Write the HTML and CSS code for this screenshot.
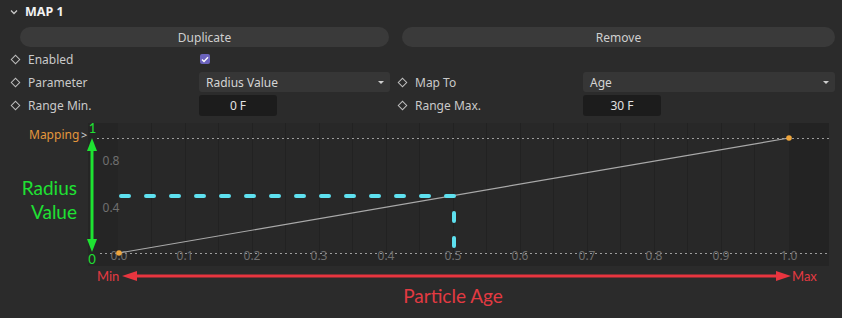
FILE: index.html
```html
<!DOCTYPE html>
<html lang="en">
<head>
    <meta charset="UTF-8">
    <title>Map 1</title>
    <link rel="stylesheet" href="styles.css">
</head>
<body>

<div class="group-header">
    <svg class="chevron" width="8" height="6" viewBox="0 0 8 6"><path d="M1 1.5 L4 4.5 L7 1.5" fill="none" stroke="#c8c8c8" stroke-width="1.3"/></svg>
    <span class="group-title">MAP 1</span>
</div>

<div class="button-row">
    <button>Duplicate</button>
    <button>Remove</button>
</div>

<div class="param-grid">
    <div class="label"><span class="keyframe"></span>Enabled</div>
    <div class="cell"><span class="checkbox"><svg width="8" height="7" viewBox="0 0 8 7"><path d="M1 3.6 L3 5.5 L7 1.3" fill="none" stroke="#fff" stroke-width="1.4"/></svg></span></div>
    <div></div>
    <div></div>

    <div class="label"><span class="keyframe"></span>Parameter</div>
    <div class="cell"><div class="dropdown">Radius Value<span class="caret"></span></div></div>
    <div class="label second"><span class="keyframe"></span>Map To</div>
    <div class="cell"><div class="dropdown">Age<span class="caret"></span></div></div>

    <div class="label"><span class="keyframe"></span>Range Min.</div>
    <div class="cell"><div class="number-field">0 F</div></div>
    <div class="label second"><span class="keyframe"></span>Range Max.</div>
    <div class="cell"><div class="number-field">30 F</div></div>
</div>

<div class="graph">
    <svg width="842" height="198" viewBox="0 0 842 198">
        <!-- panel -->
        <rect x="88" y="2" width="741" height="143" fill="#252525"/>
        <rect x="118" y="2" width="671" height="130" fill="#282828"/>
        <rect x="789" y="2" width="40" height="130" fill="#232323"/>
        <g stroke="#222" stroke-width="1">
            <line x1="151.5" y1="2" x2="151.5" y2="132"/>
            <line x1="185.5" y1="2" x2="185.5" y2="132"/>
            <line x1="218.5" y1="2" x2="218.5" y2="132"/>
            <line x1="252.5" y1="2" x2="252.5" y2="132"/>
            <line x1="285.5" y1="2" x2="285.5" y2="132"/>
            <line x1="319.5" y1="2" x2="319.5" y2="132"/>
            <line x1="352.5" y1="2" x2="352.5" y2="132"/>
            <line x1="386.5" y1="2" x2="386.5" y2="132"/>
            <line x1="419.5" y1="2" x2="419.5" y2="132"/>
            <line x1="453.5" y1="2" x2="453.5" y2="132"/>
            <line x1="486.5" y1="2" x2="486.5" y2="132"/>
            <line x1="520.5" y1="2" x2="520.5" y2="132"/>
            <line x1="553.5" y1="2" x2="553.5" y2="132"/>
            <line x1="587.5" y1="2" x2="587.5" y2="132"/>
            <line x1="620.5" y1="2" x2="620.5" y2="132"/>
            <line x1="654.5" y1="2" x2="654.5" y2="132"/>
            <line x1="687.5" y1="2" x2="687.5" y2="132"/>
            <line x1="721.5" y1="2" x2="721.5" y2="132"/>
            <line x1="754.5" y1="2" x2="754.5" y2="132"/>
        </g>

        <!-- limits -->
        <g stroke="#9c9c9c" stroke-width="1" stroke-dasharray="2 3">
            <line x1="97" y1="17.5" x2="829" y2="17.5"/>
            <line x1="100" y1="132.5" x2="829" y2="132.5"/>
        </g>

        <g class="axis-label" text-anchor="middle">
            <text x="111" y="44">0.8</text>
            <text x="111" y="91">0.4</text>
            <text x="119" y="139">0.0</text>
            <text x="185" y="139">0.1</text>
            <text x="252" y="139">0.2</text>
            <text x="319" y="139">0.3</text>
            <text x="386" y="139">0.4</text>
            <text x="453" y="139">0.5</text>
            <text x="520" y="139">0.6</text>
            <text x="587" y="139">0.7</text>
            <text x="654" y="139">0.8</text>
            <text x="721" y="139">0.9</text>
            <text x="789" y="139">1.0</text>
        </g>

        <text class="mapping" x="29" y="18">Mapping</text>
        <text class="mapping-arrow" x="81" y="18">&gt;</text>

        <!-- curve -->
        <line x1="119" y1="132" x2="789" y2="17" stroke="#a9a9a9" stroke-width="1.2"/>
        <circle cx="119" cy="132" r="2.8" fill="#eea53c"/>
        <circle cx="789" cy="17" r="2.8" fill="#eea53c"/>

        <!-- sample -->
        <path d="M121 75 H454 V132" fill="none" stroke="#5ee0ef" stroke-width="4" stroke-linecap="round" stroke-linejoin="round" stroke-dasharray="8 17"/>

        <!-- output annotation -->
        <text class="note green" x="92.5" y="12" text-anchor="middle">1</text>
        <text class="note green" x="92" y="143" text-anchor="middle">0</text>
        <line x1="92" y1="28" x2="92" y2="120" stroke="#1ee332" stroke-width="3"/>
        <path d="M92 17 L87 30 L97 30 Z" fill="#1ee332"/>
        <path d="M92 131 L87 118 L97 118 Z" fill="#1ee332"/>
        <text class="note big green" x="77" y="74" text-anchor="end">Radius</text>
        <text class="note big green" x="77" y="98" text-anchor="end">Value</text>

        <!-- input annotation -->
        <line x1="134" y1="155" x2="778" y2="155" stroke="#e8353f" stroke-width="3"/>
        <path d="M122 155 L137 150 L137 160 Z" fill="#e8353f"/>
        <path d="M791 155 L776 150 L776 160 Z" fill="#e8353f"/>
        <text class="note red" x="97" y="160">Min</text>
        <text class="note red" x="792" y="160">Max</text>
        <text class="note big red" x="453" y="182" text-anchor="middle">Particle Age</text>
    </svg>
</div>

</body>
</html>
```

FILE: styles.css
```css
body {
    margin: 0;
    background: #2b2b2b;
    color: #c9c9c9;
    font-family: "Noto Sans", "Open Sans", sans-serif;
    font-size: 12px;
    width: 842px;
    height: 318px;
    overflow: hidden;
}

.group-header {
    height: 23px;
    display: flex;
    align-items: center;
    padding-left: 10px;
    gap: 7px;
}

.chevron {
    margin-top: 1px;
}

.group-title {
    color: #f2f2f2;
    font-weight: bold;
    font-size: 12.5px;
}

.button-row {
    display: grid;
    grid-template-columns: 369px 433px;
    gap: 13px;
    padding: 4px 0 1px 20px;
}

button {
    height: 20px;
    border: none;
    border-radius: 10px;
    background: #3a3a3a;
    color: #cfcfcf;
    font-family: inherit;
    font-size: 12px;
    padding: 0;
}

.param-grid {
    display: grid;
    grid-template-columns: 190px 191px 193px 252px;
    grid-auto-rows: 22px;
    row-gap: 1px;
    padding-left: 9px;
}

.label {
    display: flex;
    align-items: center;
    gap: 9px;
    padding-left: 3px;
}

.label.second {
    padding-left: 9px;
}

.keyframe {
    width: 5px;
    height: 5px;
    border: 1.3px solid #bdbdbd;
    transform: rotate(45deg);
}

.cell {
    display: flex;
    align-items: center;
}

.checkbox {
    width: 10px;
    height: 10px;
    margin-left: 1px;
    border-radius: 2px;
    background: #6b63bd;
    display: flex;
    align-items: center;
    justify-content: center;
}

.dropdown {
    width: 100%;
    height: 20px;
    border-radius: 3px;
    background: #363636;
    display: flex;
    align-items: center;
    justify-content: space-between;
    padding: 0 6px 0 7px;
    box-sizing: border-box;
    color: #d4d4d4;
}

.caret {
    width: 0;
    height: 0;
    border-left: 3px solid transparent;
    border-right: 3px solid transparent;
    border-top: 3px solid #cfcfcf;
}

.number-field {
    width: 78px;
    height: 21px;
    border-radius: 3px;
    background: #1c1c1c;
    display: flex;
    align-items: center;
    justify-content: center;
    color: #e2e2e2;
}

.graph {
    margin-top: 5px;
}

.graph svg {
    display: block;
}

.axis-label {
    font-family: "Noto Sans", sans-serif;
    font-size: 12px;
    fill: #707070;
}

.mapping {
    font-family: "Noto Sans", sans-serif;
    font-size: 12px;
    fill: #e3973c;
}

.mapping-arrow {
    font-family: "Noto Sans", sans-serif;
    font-size: 11px;
    fill: #d0d0d0;
}

.note {
    font-family: "Lato", "Noto Sans", sans-serif;
    font-size: 13px;
}

.note.big {
    font-size: 19px;
}

.green {
    fill: #1fe033;
}

.red {
    fill: #e33a42;
}
```
